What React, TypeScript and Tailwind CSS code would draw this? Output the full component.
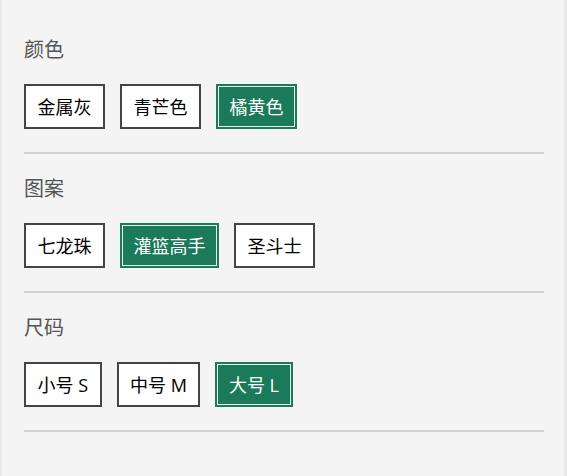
import { useState } from 'react'

const groups = [
  { title: '颜色', options: ['金属灰', '青芒色', '橘黄色'], initial: 2 },
  { title: '图案', options: ['七龙珠', '灌篮高手', '圣斗士'], initial: 1 },
  { title: '尺码', options: ['小号 S', '中号 M', '大号 L'], initial: 2 },
]

const OptionGroup = ({ title, options, initial }: { title: string; options: string[]; initial: number }) => {
  const [selected, setSelected] = useState(initial)
  return (
    <div className="pt-[23px] pb-[23px] border-b-2 border-[#d2d2d2]">
      <h2 className="text-[20px] leading-6 text-[#555]">{title}</h2>
      <div className="flex gap-[15px] mt-[22px]">
        {options.map((opt, i) => (
          <button
            key={opt}
            onClick={() => setSelected(i)}
            className={`h-[45px] px-[11.5px] flex items-center border-2 text-[18px] leading-6 ${
              selected === i
                ? 'bg-[#1a7a5a] border-[#1a7a5a] text-white shadow-[inset_0_0_0_1px_#e6f2ee]'
                : 'bg-white border-[#444] text-black'
            }`}
          >
            {opt}
          </button>
        ))}
      </div>
    </div>
  )
}

export default function App() {
  return (
    <div className="w-[567px] h-[476px] bg-[#e9e9e9] flex" style={{ fontFamily: '"Open Sans", "Noto Sans CJK SC", sans-serif' }}>
      <div className="ml-[2px] w-[562px] h-full bg-[#f4f4f4] pl-[22px] pr-[20px] pt-[15px]">
        {groups.map(g => (
          <OptionGroup key={g.title} {...g} />
        ))}
      </div>
    </div>
  )
}
